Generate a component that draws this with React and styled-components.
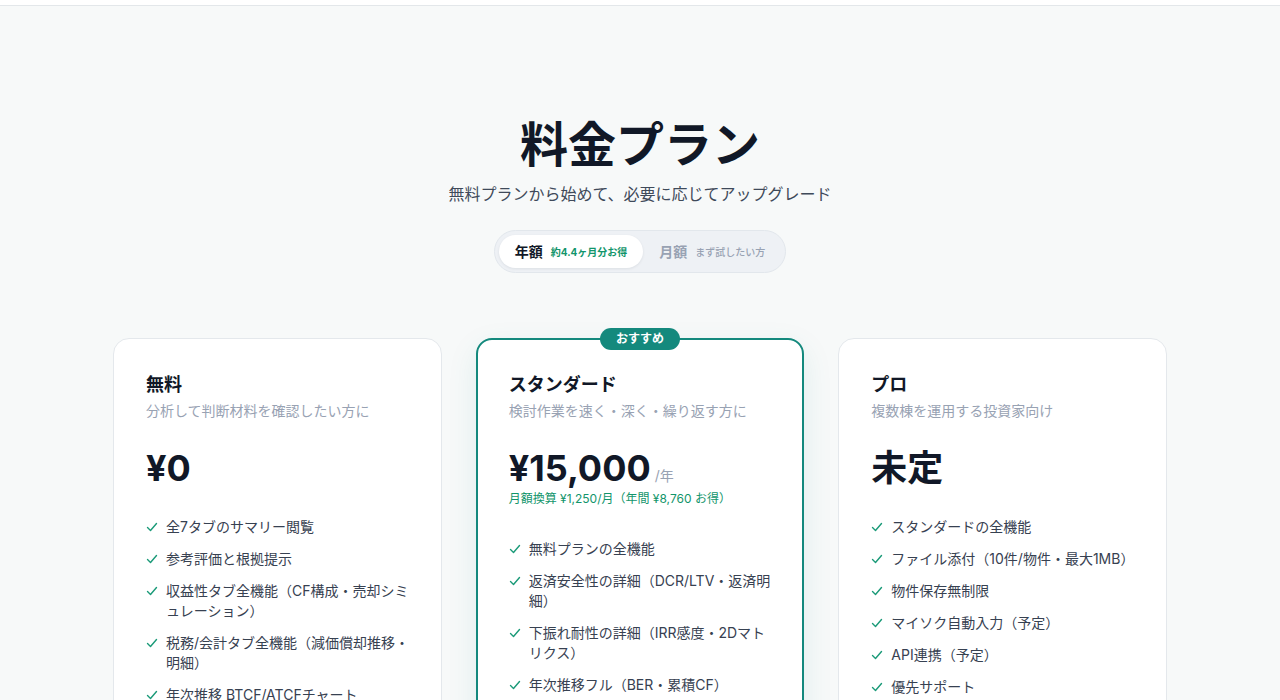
import React from "react";
import styled, { createGlobalStyle } from "styled-components";

const GlobalStyle = createGlobalStyle`
  * { box-sizing: border-box; }
  body {
    margin: 0;
    background: #f7f9f9;
    font-family: "Inter", "Noto Sans CJK JP", sans-serif;
    color: #0f172a;
  }
`;

const TopBar = styled.div`
  height: 6px;
  background: #ffffff;
  border-bottom: 1px solid #e3e7ea;
`;

const Section = styled.section`
  display: flex;
  flex-direction: column;
  align-items: center;
  padding: 110px 0 80px;
`;

const Title = styled.h1`
  margin: 0;
  font-size: 48px;
  line-height: 1.2;
  font-weight: 700;
  color: #111827;
`;

const Lead = styled.p`
  margin: 8px 0 0;
  font-size: 16px;
  line-height: 24px;
  color: #3f4a5a;
`;

const Toggle = styled.div`
  margin-top: 24px;
  display: flex;
  padding: 4px;
  border-radius: 999px;
  background: #eef1f5;
  border: 1px solid #e2e7ec;
`;

const ToggleBtn = styled.button`
  display: flex;
  align-items: center;
  gap: 8px;
  height: 33px;
  padding: 0 16px;
  border: none;
  border-radius: 999px;
  font-family: inherit;
  cursor: pointer;
  background: ${p => (p.$active ? "#ffffff" : "transparent")};
  box-shadow: ${p => (p.$active ? "0 1px 3px rgba(15,23,42,0.08)" : "none")};
`;

const ToggleLabel = styled.span`
  font-size: 14px;
  font-weight: 700;
  color: ${p => (p.$active ? "#111827" : "#98a2b3")};
`;

const ToggleNote = styled.span`
  font-size: 10px;
  font-weight: ${p => (p.$active ? 700 : 500)};
  color: ${p => (p.$active ? "#12956b" : "#98a2b3")};
`;

const Cards = styled.div`
  margin-top: 65px;
  width: 1054px;
  display: grid;
  grid-template-columns: repeat(3, 1fr);
  gap: 34px;
  align-items: start;
`;

const Card = styled.div`
  position: relative;
  background: #ffffff;
  border-radius: 16px;
  border: ${p => (p.$featured ? "2px solid #14897d" : "1px solid #e4e8ec")};
  padding: ${p => (p.$featured ? "31px 27px 31px 31px" : "32px 28px 32px 32px")};
  box-shadow: ${p => (p.$featured ? "0 10px 30px rgba(20,137,125,0.10)" : "none")};
  min-height: 420px;
`;

const Badge = styled.span`
  position: absolute;
  top: -12px;
  left: 50%;
  transform: translateX(-50%);
  background: #14897d;
  color: #ffffff;
  font-size: 12px;
  font-weight: 700;
  line-height: 22px;
  padding: 0 16px;
  border-radius: 999px;
  white-space: nowrap;
`;

const PlanName = styled.h2`
  margin: 0;
  font-size: 18px;
  line-height: 28px;
  font-weight: 700;
  color: #111827;
`;

const PlanDesc = styled.p`
  margin: 2px 0 0;
  font-size: 14px;
  line-height: 20px;
  color: #98a2b3;
`;

const PriceRow = styled.div`
  margin-top: 27px;
  display: flex;
  align-items: baseline;
  gap: 4px;
`;

const Price = styled.span`
  font-size: 36px;
  line-height: 40px;
  font-weight: 700;
  color: #111827;
`;

const Per = styled.span`
  font-size: 14px;
  color: #98a2b3;
`;

const PriceNote = styled.div`
  margin-top: 3px;
  font-size: 12px;
  line-height: 16px;
  color: #12956b;
`;

const Features = styled.ul`
  list-style: none;
  margin: ${p => (p.$tight ? "32px" : "29px")} 0 0;
  padding: 0;
  display: flex;
  flex-direction: column;
  gap: 12px;
`;

const Feature = styled.li`
  display: flex;
  gap: 8px;
  font-size: 14px;
  line-height: 20px;
  color: #374151;
`;

const CheckIcon = styled.svg`
  flex: none;
  width: 12px;
  height: 20px;
`;

const Check = () => (
  <CheckIcon viewBox="0 0 12 20" fill="none">
    <polyline points="1.5,10.5 4.5,13.5 10.5,6.5" stroke="#1a9a78" strokeWidth="1.4" strokeLinecap="round" strokeLinejoin="round" />
  </CheckIcon>
);

const plans = [
  {
    name: "無料",
    desc: "分析して判断材料を確認したい方に",
    price: "¥0",
    features: [
      "全7タブのサマリー閲覧",
      "参考評価と根拠提示",
      "収益性タブ全機能（CF構成・売却シミュレーション）",
      "税務/会計タブ全機能（減価償却推移・明細）",
      "年次推移 BTCF/ATCFチャート",
    ],
  },
  {
    name: "スタンダード",
    desc: "検討作業を速く・深く・繰り返す方に",
    price: "¥15,000",
    per: "/年",
    note: "月額換算 ¥1,250/月（年間 ¥8,760 お得）",
    featured: true,
    features: [
      "無料プランの全機能",
      "返済安全性の詳細（DCR/LTV・返済明細）",
      "下振れ耐性の詳細（IRR感度・2Dマトリクス）",
      "年次推移フル（BER・累積CF）",
      "物件保存（最大20件）",
    ],
  },
  {
    name: "プロ",
    desc: "複数棟を運用する投資家向け",
    price: "未定",
    features: [
      "スタンダードの全機能",
      "ファイル添付（10件/物件・最大1MB）",
      "物件保存無制限",
      "マイソク自動入力（予定）",
      "API連携（予定）",
      "優先サポート",
    ],
  },
];

export default function App() {
  return (
    <>
      <GlobalStyle />
      <TopBar />
      <Section>
        <Title>料金プラン</Title>
        <Lead>無料プランから始めて、必要に応じてアップグレード</Lead>
        <Toggle>
          <ToggleBtn $active>
            <ToggleLabel $active>年額</ToggleLabel>
            <ToggleNote $active>約4.4ヶ月分お得</ToggleNote>
          </ToggleBtn>
          <ToggleBtn>
            <ToggleLabel>月額</ToggleLabel>
            <ToggleNote>まず試したい方</ToggleNote>
          </ToggleBtn>
        </Toggle>
        <Cards>
          {plans.map(plan => (
            <Card key={plan.name} $featured={plan.featured}>
              {plan.featured && <Badge>おすすめ</Badge>}
              <PlanName>{plan.name}</PlanName>
              <PlanDesc>{plan.desc}</PlanDesc>
              <PriceRow>
                <Price>{plan.price}</Price>
                {plan.per && <Per>{plan.per}</Per>}
              </PriceRow>
              {plan.note && <PriceNote>{plan.note}</PriceNote>}
              <Features $tight={!!plan.note}>
                {plan.features.map(f => (
                  <Feature key={f}>
                    <Check />
                    <span>{f}</span>
                  </Feature>
                ))}
              </Features>
            </Card>
          ))}
        </Cards>
      </Section>
    </>
  );
}
